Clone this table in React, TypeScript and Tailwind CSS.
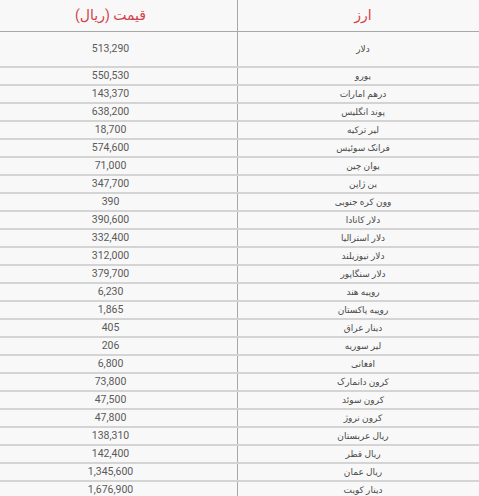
const rows: [string, string][] = [
  ["دلار", "513,290"],
  ["یورو", "550,530"],
  ["درهم امارات", "143,370"],
  ["پوند انگلیس", "638,200"],
  ["لیر ترکیه", "18,700"],
  ["فرانک سوئیس", "574,600"],
  ["یوان چین", "71,000"],
  ["ین ژاپن", "347,700"],
  ["وون کره جنوبی", "390"],
  ["دلار کانادا", "390,600"],
  ["دلار استرالیا", "332,400"],
  ["دلار نیوزیلند", "312,000"],
  ["دلار سنگاپور", "379,700"],
  ["روپیه هند", "6,230"],
  ["روپیه پاکستان", "1,865"],
  ["دینار عراق", "405"],
  ["لیر سوریه", "206"],
  ["افغانی", "6,800"],
  ["کرون دانمارک", "73,800"],
  ["کرون سوئد", "47,500"],
  ["کرون نروژ", "47,800"],
  ["ریال عربستان", "138,310"],
  ["ریال قطر", "142,400"],
  ["ریال عمان", "1,345,600"],
  ["دینار کویت", "1,676,900"],
];

export default function App() {
  return (
    <div
      dir="rtl"
      className="h-[496px] w-[479px] overflow-hidden bg-[#f8f8f8] text-[#555]"
      style={{ fontFamily: "Roboto, 'DejaVu Sans', sans-serif" }}
    >
      <div className="grid grid-cols-[241px_1fr] border-b border-[#a8a8a8]">
        <div className="flex h-[31px] items-center justify-center pl-[9px] text-[14px] text-[#d43f4a]">ارز</div>
        <div className="flex h-[31px] items-center justify-center border-r border-[#a8a8a8] pr-[16px] text-[14px] text-[#d43f4a]">
          قیمت (ریال)
        </div>
      </div>
      {rows.map(([name, price], i) => (
        <div key={name} className="grid grid-cols-[241px_1fr] border-b-2 border-[#d4d4d4]">
          <div
            className={`flex items-center justify-center pl-[9px] text-[9px] leading-none text-[#4a4a4a] ${i === 0 ? "h-[34px]" : "h-[16px]"}`}
          >
            {name}
          </div>
          <div
            className={`flex items-center justify-center border-r border-[#a8a8a8] pr-[16px] text-[10.5px] leading-none text-[#5a5a5a] ${i === 0 ? "h-[34px]" : "h-[16px]"}`}
          >
            {price}
          </div>
        </div>
      ))}
    </div>
  );
}
